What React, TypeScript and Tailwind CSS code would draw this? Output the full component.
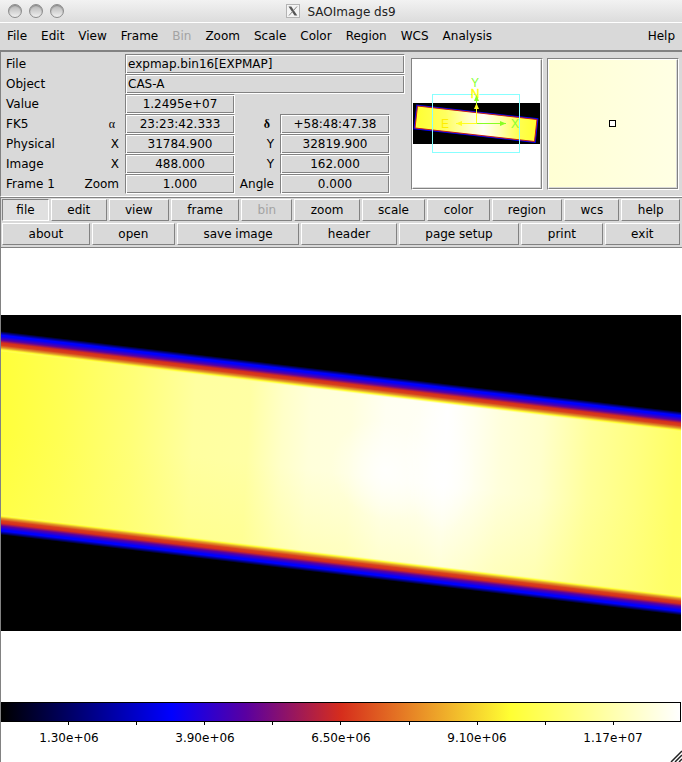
import React from 'react'

type Readout = {
    label: string
    unit?: string
    value: string
    unit2?: string
    value2?: string
    greek?: boolean
}

const menus = [
    'File',
    'Edit',
    'View',
    'Frame',
    'Bin',
    'Zoom',
    'Scale',
    'Color',
    'Region',
    'WCS',
    'Analysis',
]

const categories = [
    'file',
    'edit',
    'view',
    'frame',
    'bin',
    'zoom',
    'scale',
    'color',
    'region',
    'wcs',
    'help',
]

const fileActions = [
    'about',
    'open',
    'save image',
    'header',
    'page setup',
    'print',
    'exit',
]

const readouts: Readout[] = [
    {label: 'Value', value: '1.2495e+07'},
    {
        label: 'FK5',
        unit: 'α',
        value: '23:23:42.333',
        unit2: 'δ',
        value2: '+58:48:47.38',
        greek: true,
    },
    {
        label: 'Physical',
        unit: 'X',
        value: '31784.900',
        unit2: 'Y',
        value2: '32819.900',
    },
    {
        label: 'Image',
        unit: 'X',
        value: '488.000',
        unit2: 'Y',
        value2: '162.000',
    },
    {
        label: 'Frame 1',
        unit: 'Zoom',
        value: '1.000',
        unit2: 'Angle',
        value2: '0.000',
    },
]

const colorbarLabels = [
    '1.30e+06',
    '3.90e+06',
    '6.50e+06',
    '9.10e+06',
    '1.17e+07',
]

const groove =
    'border border-t-[#828282] border-l-[#828282] border-r-white border-b-white shadow-[inset_1px_1px_0_#fff,inset_-1px_-1px_0_#828282]'

const raised =
    'border border-t-white border-l-white border-r-[#828282] border-b-[#828282] active:border-[#828282]'

function Field({
    name,
    value,
    align = 'text-center',
}: {
    name: string
    value: string
    align?: string
}) {
    return (
        <input
            readOnly
            aria-label={name}
            value={value}
            className={`block h-5 w-full min-w-0 bg-transparent px-0.5 outline-none ${align} ${groove}`}
        />
    )
}

function TitleBar() {
    return (
        <header className="relative flex h-[22px] items-center justify-center bg-linear-to-b from-[#f2f2f2] to-[#dcdcdc]">
            <div className="absolute left-2 flex gap-[7px]">
                {['Close', 'Minimize', 'Zoom'].map((name) => (
                    <button
                        key={name}
                        aria-label={name}
                        className="size-3.5 rounded-full border border-[#8c8c8c] bg-linear-to-b from-[#b4b4b4] to-[#f0f0f0] shadow-[inset_0_1px_1px_#888]"
                    />
                ))}
            </div>
            <div className="flex items-center gap-[7px]">
                <svg className="size-3.5" viewBox="0 0 14 14" aria-hidden="true">
                    <rect x=".5" y=".5" width="13" height="13" fill="#f4f4f4" stroke="#b4b4b4" />
                    <path d="M2.500 2.500h2.800l6 9H8.500z" fill="#555" />
                    <path d="M11 2.500 3 11.500" stroke="#777" strokeWidth=".9" />
                </svg>
                <h1 className="pt-0.5 text-[#222]">SAOImage ds9</h1>
            </div>
        </header>
    )
}

function MenuBar() {
    return (
        <nav className="flex h-[30px] items-center gap-3.5 border-t border-b-2 border-t-white border-b-[#828282] pr-[7px] pb-0.5 pl-[7px]">
            {menus.map((name) => (
                <button
                    key={name}
                    disabled={name === 'Bin'}
                    className="disabled:text-[#a3a3a3]">
                    {name}
                </button>
            ))}
            <button className="ml-auto">Help</button>
        </nav>
    )
}

function InfoPanel() {
    return (
        <div className="grid flex-1 auto-rows-[20px] grid-cols-[75px_44px_110px_45px_110px_1fr] items-center">
            <span>File</span>
            <div className="col-span-4 col-start-3">
                <Field name="File" value="expmap.bin16[EXPMAP]" align="text-left" />
            </div>
            <span>Object</span>
            <div className="col-span-4 col-start-3">
                <Field name="Object" value="CAS-A" align="text-left" />
            </div>
            {readouts.map((r) => {
                const unitFont = r.greek
                    ? 'pr-2.5 text-right font-["Liberation_Serif",serif]'
                    : 'pr-1.5 text-right'
                return (
                    <React.Fragment key={r.label}>
                        <span className="col-start-1">{r.label}</span>
                        <span className={unitFont}>{r.unit}</span>
                        <Field name={`${r.label} ${r.unit ?? ''}`} value={r.value} />
                        {r.value2 && (
                            <>
                                <span className={`${unitFont} ${r.greek ? 'font-bold' : ''}`}>
                                    {r.unit2}
                                </span>
                                <Field name={`${r.label} ${r.unit2}`} value={r.value2} />
                            </>
                        )}
                    </React.Fragment>
                )
            })}
        </div>
    )
}

function Panner() {
    return (
        <svg className="block size-full" viewBox="0 0 127 127" aria-label="Panner">
            <defs>
                <linearGradient id="pan">
                    <stop offset="0" stopColor="#ffff30" />
                    <stop offset=".25" stopColor="#ffff60" />
                    <stop offset=".45" stopColor="#ffffc8" />
                    <stop offset=".56" stopColor="#fffff6" />
                    <stop offset=".7" stopColor="#ffffb0" />
                    <stop offset=".85" stopColor="#ffff50" />
                    <stop offset="1" stopColor="#ffff30" />
                </linearGradient>
            </defs>
            <rect width="127" height="127" fill="#fff" />
            <rect y="43" width="127" height="41" fill="#000" />
            <path d="M4.500 46 124 59.500 121.500 81.500 2 68z" fill="url(#pan)" stroke="#00f" strokeWidth="2.600" />
            <path d="M4.500 46 124 59.500 121.500 81.500 2 68z" fill="url(#pan)" stroke="#c82010" strokeWidth="1" />
            <rect x="19.500" y="34.500" width="87" height="58" fill="none" stroke="#8ff" />
            <g fontFamily="Liberation Sans, sans-serif" fontSize="12" textAnchor="middle">
                <text x="62" y="27" fill="#8f3">Y</text>
                <text x="62" y="38" fill="#ff0" stroke="#ff0" strokeWidth=".4">N</text>
                <text x="32" y="68" fill="#fe0">E</text>
                <text x="102" y="68" fill="#8f3">X</text>
            </g>
            <path d="M63.500 63.500V38M63.500 63.500H93" stroke="#8f2" />
            <path d="M61 41l2.500-6 2.500 6zM87 61l6 2.500-6 2.500z" fill="#8f2" />
            <path d="M63.500 63.500V47M63.500 63.500H43" stroke="#ff2" />
            <path d="M61 49l2.500-6 2.500 6zM49 61l-6 2.500 6 2.500z" fill="#ff2" />
        </svg>
    )
}

function Magnifier() {
    return (
        <div className="flex size-full items-center justify-center bg-linear-to-r from-[#ffffd4] to-[#ffffe4]">
            <span className="size-[7px] border border-black bg-white" />
        </div>
    )
}

function Well({children}: {children: React.ReactNode}) {
    return (
        <div className="size-[132px] border border-t-[#828282] border-r-white border-b-white border-l-[#828282]">
            <div className="size-full border border-t-white border-r-[#828282] border-b-[#828282] border-l-white pr-px pb-px">
                {children}
            </div>
        </div>
    )
}

function ButtonBar() {
    return (
        <div className="flex flex-col gap-0.5 border-t border-b border-l border-[#828282] pt-px pr-0.5 pb-0.5 pl-px">
            <div className="flex gap-0.5">
                {categories.map((name) => (
                    <button
                        key={name}
                        disabled={name === 'bin'}
                        className={
                            name === 'file'
                                ? 'h-[22px] flex-auto border border-t-[#828282] border-r-white border-b-white border-l-[#828282] bg-[#e0e0e0]'
                                : `h-[22px] flex-auto px-0.5 disabled:text-[#a3a3a3] ${raised}`
                        }>
                        {name}
                    </button>
                ))}
            </div>
            <div className="flex gap-0.5">
                {fileActions.map((name) => (
                    <button key={name} className={`h-[22px] flex-auto ${raised}`}>
                        {name}
                    </button>
                ))}
            </div>
        </div>
    )
}

function ExposureMap() {
    return (
        <svg className="block w-full" viewBox="0 0 680 316" aria-label="Exposure map">
            <defs>
                <linearGradient id="level" gradientUnits="userSpaceOnUse" x1="0" y1="0" x2="680" y2="0" gradientTransform="skewX(-3)">
                    <stop offset="0" stopColor="#ffff38" />
                    <stop offset=".1" stopColor="#ffff55" />
                    <stop offset=".2" stopColor="#ffff78" />
                    <stop offset=".29" stopColor="#ffffa0" />
                    <stop offset=".37" stopColor="#ffffa4" />
                    <stop offset=".42" stopColor="#ffffc8" />
                    <stop offset=".46" stopColor="#ffffda" />
                    <stop offset=".52" stopColor="#ffffde" />
                    <stop offset=".57" stopColor="#fffff2" />
                    <stop offset=".62" stopColor="#fffff4" />
                    <stop offset=".66" stopColor="#fff" />
                    <stop offset=".7" stopColor="#fffff0" />
                    <stop offset=".74" stopColor="#ffffdc" />
                    <stop offset=".8" stopColor="#ffffcc" />
                    <stop offset=".87" stopColor="#ffff9c" />
                    <stop offset=".94" stopColor="#ffff80" />
                    <stop offset="1" stopColor="#ffff64" />
                </linearGradient>
                <linearGradient id="falloff" x1="0" y1="0" x2="0" y2="1">
                    <stop offset=".5" stopColor="#ff6" stopOpacity="0" />
                    <stop offset="1" stopColor="#ff6" stopOpacity=".28" />
                </linearGradient>
                <radialGradient id="peak">
                    <stop offset="0" stopColor="#fff" stopOpacity=".8" />
                    <stop offset="1" stopColor="#fff" stopOpacity="0" />
                </radialGradient>
                <linearGradient id="edge" x1="0" y1="0" x2="0" y2="1">
                    <stop offset="0" stopColor="#000" />
                    <stop offset=".02" stopColor="#00f" />
                    <stop offset=".026" stopColor="#00f" />
                    <stop offset=".044" stopColor="#5a00a0" />
                    <stop offset=".058" stopColor="#d62d1c" />
                    <stop offset=".07" stopColor="#d8401c" />
                    <stop offset=".082" stopColor="#e09828" />
                    <stop offset=".092" stopColor="#ff3" />
                    <stop offset=".102" stopColor="#ff8" stopOpacity="0" />
                    <stop offset=".898" stopColor="#ff8" stopOpacity="0" />
                    <stop offset=".908" stopColor="#ff3" />
                    <stop offset=".918" stopColor="#e09828" />
                    <stop offset=".93" stopColor="#d8401c" />
                    <stop offset=".942" stopColor="#d62d1c" />
                    <stop offset=".956" stopColor="#5a00a0" />
                    <stop offset=".974" stopColor="#00f" />
                    <stop offset=".98" stopColor="#00f" />
                    <stop offset="1" stopColor="#000" />
                </linearGradient>
            </defs>
            <rect width="680" height="316" fill="#000" />
            <g transform="skewY(6.75)">
                <rect y="30" width="680" height="176" fill="url(#level)" />
                <rect y="30" width="680" height="176" fill="url(#falloff)" />
                <ellipse cx="385" cy="110" rx="55" ry="50" fill="url(#peak)" />
                <ellipse cx="438" cy="98" rx="36" ry="68" fill="url(#peak)" />
                <rect y="16" width="680" height="204" fill="url(#edge)" />
            </g>
        </svg>
    )
}

function Colorbar() {
    return (
        <div>
            <div className="h-5 border border-black bg-[linear-gradient(to_right,#000,#00f_25%,#5a00a0_36%,#d62d1c_50%,#ff3_75%,#fff)]" />
            <div className="flex h-[3px] justify-evenly">
                {Array.from({length: 9}, (_, i) => (
                    <span key={i} className="w-px bg-black" />
                ))}
            </div>
            <div className="mt-1 grid grid-cols-5 text-center">
                {colorbarLabels.map((label) => (
                    <span key={label}>{label}</span>
                ))}
            </div>
        </div>
    )
}

export default function App() {
    return (
        <div className="flex min-h-screen flex-col bg-[#d9d9d9] font-['DejaVu_Sans',sans-serif] text-[12px] leading-[18px] text-black">
            <TitleBar />
            <MenuBar />
            <section className="flex border-b border-l border-b-white border-l-[#828282] pt-0.5 pr-[3px] pl-[5px]">
                <InfoPanel />
                <div className="ml-1.5 flex gap-1 pt-1 pb-1.5">
                    <Well>
                        <Panner />
                    </Well>
                    <Well>
                        <Magnifier />
                    </Well>
                </div>
            </section>
            <ButtonBar />
            <main className="relative flex flex-1 flex-col border-l border-[#828282] bg-white pt-[67px] pr-px">
                <ExposureMap />
                <div className="mt-[71px]">
                    <Colorbar />
                </div>
                <svg className="absolute right-0 bottom-0 size-3" viewBox="0 0 12 12" aria-hidden="true">
                    <path d="M1 12 12 1M5 12l7-7M9 12l3-3" stroke="#222" strokeWidth="1.500" />
                </svg>
            </main>
        </div>
    )
}
